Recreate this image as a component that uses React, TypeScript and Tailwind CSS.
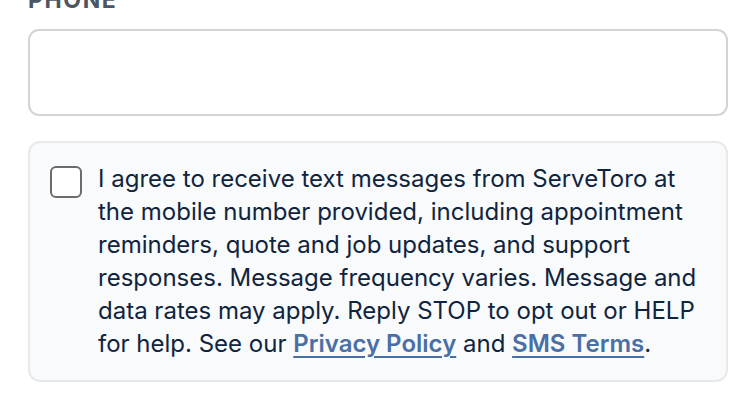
import React, { useState } from 'react';

const App: React.FC = () => {
  const [phone, setPhone] = useState('');
  const [agreed, setAgreed] = useState(false);

  return (
    <div className="min-h-screen bg-white font-['Inter','Liberation_Sans',sans-serif]">
      <div className="px-[28px] mt-[-14px]">
        <label className="block text-[23px] leading-[28px] font-bold tracking-[0.07em] uppercase text-[#4b5563] mb-[15px]">
          Phone
        </label>
        <input
          type="tel"
          value={phone}
          onChange={(e) => setPhone(e.target.value)}
          className="block w-full h-[87px] rounded-[11px] border-2 border-[#d4d4d8] bg-white px-4 text-[24px] outline-none"
        />

        <div className="mt-[25px] flex gap-[16px] rounded-[12px] border-2 border-[#e8e9ec] bg-[#f8fafc] pl-[20px] pr-[17px] pt-[19px] pb-[20px]">
          <button
            type="button"
            onClick={() => setAgreed(!agreed)}
            className="mt-[4px] h-[32px] w-[32px] shrink-0 rounded-[6px] border-2 border-[#6b6b6b] bg-white"
            aria-checked={agreed}
            role="checkbox"
          />
          <p className="text-[24px] leading-[33px] text-[#10243e]">
            I agree to receive text messages from ServeToro at the mobile number provided, including appointment
            reminders, quote and job updates, and support responses. Message frequency varies. Message and data rates
            may apply. Reply STOP to opt out or HELP for help. See our{' '}
            <a href="#" className="font-semibold text-[#4a6fa5] underline underline-offset-[4px] decoration-2">
              Privacy Policy
            </a>{' '}
            and{' '}
            <a href="#" className="font-semibold text-[#4a6fa5] underline underline-offset-[4px] decoration-2">
              SMS Terms
            </a>
            .
          </p>
        </div>
      </div>
    </div>
  );
};

export default App;
